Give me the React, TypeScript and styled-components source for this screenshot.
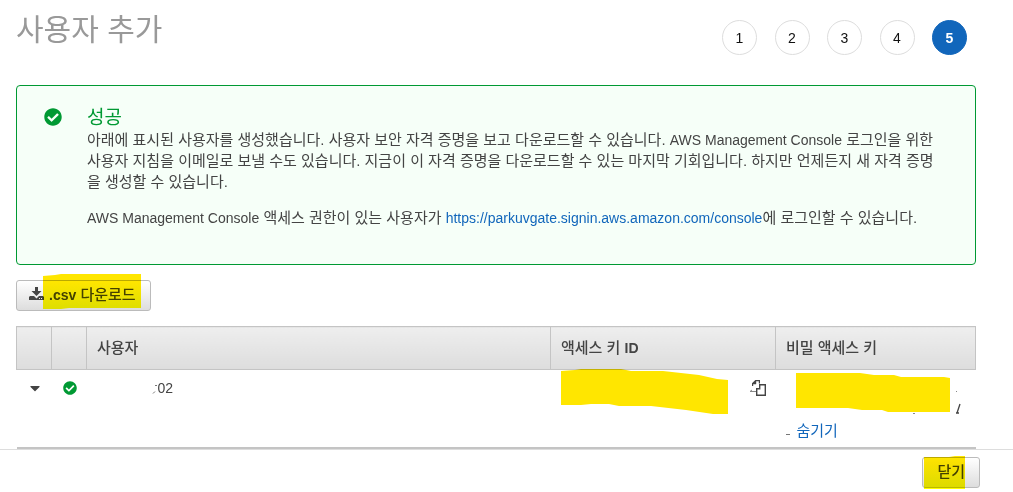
import React from "react";
import styled, { createGlobalStyle } from "styled-components";
import { FaCheckCircle, FaCaretDown } from "react-icons/fa";

const GlobalStyle = createGlobalStyle`
  * { box-sizing: border-box; }
  body {
    margin: 0;
    background: #fff;
    color: #444;
    font: 15px/21px "Liberation Sans", "Noto Sans CJK KR", sans-serif;
  }
`;

const Page = styled.div`
  display: flex;
  flex-direction: column;
`;

const Content = styled.main`
  padding: 0 37px 0 16px;
`;

const Header = styled.header`
  display: flex;
  justify-content: space-between;
  align-items: flex-start;
  height: 85px;
  padding-right: 9px;
`;

const Title = styled.h1`
  margin: 10px 0 0;
  font-size: 30px;
  line-height: 40px;
  font-weight: 400;
  color: #999;
`;

const Steps = styled.ol`
  display: flex;
  justify-content: space-between;
  width: 245px;
  margin: 20px 0 0;
  padding: 0;
  list-style: none;
`;

const Step = styled.li<{ $active?: boolean }>`
  width: 35px;
  height: 35px;
  border: 1px solid ${(p) => (p.$active ? "#1166bb" : "#ddd")};
  border-radius: 50%;
  background: ${(p) => (p.$active ? "#1166bb" : "#fff")};
  color: ${(p) => (p.$active ? "#fff" : "#111")};
  font-size: 14px;
  font-weight: ${(p) => (p.$active ? 700 : 400)};
  line-height: 34px;
  text-align: center;
`;

const Alert = styled.section`
  display: flex;
  gap: 25px;
  min-height: 180px;
  padding: 20px 32px 20px 27px;
  border: 1px solid #093;
  border-radius: 4px;
  background: #f6fff8;
`;

const AlertIcon = styled(FaCheckCircle)`
  flex: none;
  margin-top: 2px;
  color: #093;
`;

const AlertTitle = styled.h2`
  margin: 0;
  font-size: 19px;
  line-height: 23px;
  font-weight: 400;
  color: #093;
`;

const Text = styled.p`
  margin: 0 0 15px;
`;

const Latin = styled.span`
  font-size: 14px;
  line-height: 14px;
`;

const Link = styled.a`
  color: #1166bb;
  text-decoration: none;
`;

const Toolbar = styled.div`
  display: flex;
  padding: 15px 0;
`;

const Button = styled.button`
  position: relative;
  display: flex;
  align-items: center;
  gap: 5px;
  height: 31px;
  padding: 0 14px 2px;
  border: 1px solid #bbb;
  border-radius: 3px;
  background: linear-gradient(#fff, #ddd);
  color: #444;
  font: 500 15px/21px "Liberation Sans", "Noto Sans CJK KR", sans-serif;
`;

const DownloadButton = styled(Button)`
  padding-left: 12px;
`;

const Strong = styled.b`
  font-size: 14px;
  line-height: 14px;
`;

const Table = styled.table`
  width: 100%;
  table-layout: fixed;
  border-collapse: collapse;
  border-bottom: 2px solid #c4c4c4;
`;

const HeadCell = styled.th<{ $width?: number }>`
  width: ${(p) => (p.$width ? `${p.$width}px` : "auto")};
  height: 43px;
  padding: 0 10px 2px;
  border: 1px solid #c4c4c4;
  background: linear-gradient(#eee, #ddd);
  font-weight: 500;
  text-align: left;
`;

const Cell = styled.td`
  position: relative;
  height: 78px;
  padding: 8px 10px 0;
  vertical-align: top;
`;

const Centered = styled.div`
  display: flex;
  align-items: center;
  justify-content: center;
  height: 20px;
  padding-left: 1px;
`;

const UserName = styled.div`
  display: flex;
  align-items: center;
  gap: 1px;
  padding-left: 55px;
  font-size: 14px;
`;

const IconButton = styled.button`
  display: block;
  margin: 0 -1px 0 auto;
  padding: 0;
  border: 0;
  background: none;
`;

const SecretLine = styled.div`
  display: flex;
  align-items: center;
  gap: 7px;
  padding-top: 42px;
`;

const Dash = styled.span`
  width: 4px;
  height: 1px;
  margin-top: 8px;
  background: #777;
`;

const Marker = styled.svg<{ $x: number; $y: number }>`
  position: absolute;
  left: ${(p) => p.$x}px;
  top: ${(p) => p.$y}px;
  mix-blend-mode: multiply;
  pointer-events: none;
`;

const Footer = styled.footer`
  display: flex;
  justify-content: flex-end;
  padding: 7px 33px 4px 0;
  border-top: 1px solid #ddd;
`;

const InkGradient = ({ id }: { id: string }) => (
  <linearGradient id={id} x1="0" y1="0" x2="0" y2="1">
    <stop offset="0.2" stopColor="#ffe600" />
    <stop offset="1" stopColor="#ffff00" />
  </linearGradient>
);

export default function App() {
  return (
    <Page>
      <GlobalStyle />
      <Content>
        <Header>
          <Title>사용자 추가</Title>
          <Steps>
            {[1, 2, 3, 4, 5].map((n) => (
              <Step key={n} $active={n === 5}>{n}</Step>
            ))}
          </Steps>
        </Header>
        <Alert>
          <AlertIcon size={18} />
          <div>
            <AlertTitle>성공</AlertTitle>
            <Text>
              아래에 표시된 사용자를 생성했습니다. 사용자 보안 자격 증명을 보고 다운로드할 수 있습니다. <Latin>AWS Management Console</Latin> 로그인을 위한 사용자 지침을 이메일로 보낼 수도 있습니다. 지금이 이 자격 증명을 다운로드할 수 있는 마지막 기회입니다. 하지만 언제든지 새 자격 증명을 생성할 수 있습니다.
            </Text>
            <Text>
              <Latin>AWS Management Console</Latin> 액세스 권한이 있는 사용자가{" "}
              <Link href="#console"><Latin>https://parkuvgate.signin.aws.amazon.com/console</Latin></Link>에 로그인할 수 있습니다.
            </Text>
          </div>
        </Alert>
        <Toolbar>
          <DownloadButton type="button">
            <svg width="15" height="20" viewBox="0 0 15 20" fill="#444">
              <path d="M6 2h3v4h3.500L7.500 11 2.500 6H6z" />
              <path fillRule="evenodd" d="M1 11h4l2.500 2.500L10 11h4l1 1v3H0v-3zM10 13v1h1v-1zM12 13v1h1v-1z" />
            </svg>
            <span><Strong>.csv</Strong> 다운로드</span>
            <Marker $x={26} $y={-7} width="98" height="36" viewBox="0 0 98 36">
              <InkGradient id="ink-download" />
              <path d="M0 2 12 1 18 0H98V34H26L18 35H0Z" fill="url(#ink-download)" />
            </Marker>
          </DownloadButton>
        </Toolbar>
        <Table>
          <thead>
            <tr>
              <HeadCell $width={35} aria-label="펼치기" />
              <HeadCell $width={35} aria-label="상태" />
              <HeadCell>사용자</HeadCell>
              <HeadCell $width={225}>액세스 키 <Strong>ID</Strong></HeadCell>
              <HeadCell $width={200}>비밀 액세스 키</HeadCell>
            </tr>
          </thead>
          <tbody>
            <tr>
              <Cell>
                <Centered><FaCaretDown size={16} /></Centered>
              </Cell>
              <Cell>
                <Centered><FaCheckCircle size={14} color="#093" /></Centered>
              </Cell>
              <Cell>
                <UserName>
                  <svg width="5" height="12" viewBox="0 0 5 12" fill="none" stroke="#777">
                    <path d="M3 2.500h2M1 10.500l2-2" />
                  </svg>
                  02
                </UserName>
              </Cell>
              <Cell>
                <IconButton type="button" aria-label="복사">
                  <svg width="18" height="20" viewBox="0 0 18 20" fill="none" stroke="#444">
                    <path strokeWidth="1.4" d="M10.700 6.700h5.600v10.600H7.700v-6.600h3z" />
                    <path strokeWidth="1.2" d="M3.600 8V5.600l3-3h3.800v3M6.600 2.600v3h-3" />
                    <path stroke="#888" d="M7 13.500H1l2-1.500" />
                  </svg>
                </IconButton>
                <Marker $x={10} $y={-1} width="167" height="46" viewBox="0 0 167 46">
                  <path d="M0 2 14 1 20 0H60L70 2H102L138 6 156 10 167 11V45H152L125 41 90 37H58L48 35H30L20 36H0Z" fill="#ffe600" />
                </Marker>
              </Cell>
              <Cell>
                <SecretLine>
                  <Dash />
                  <Link href="#hide">숨기기</Link>
                </SecretLine>
                <Marker $x={20} $y={3} width="168" height="44" viewBox="0 0 168 44">
                  <path d="M0 0H64L78 2H98L105 4H148L154 5V39H92L86 37H66L52 35H0Z" fill="#ffe600" />
                  <path d="M164 31 161 40M160 40h3" fill="none" stroke="#444" strokeWidth="1.3" />
                  <path d="M160 18.500h1M117 40.500h2" stroke="#888" />
                </Marker>
              </Cell>
            </tr>
          </tbody>
        </Table>
      </Content>
      <Footer>
        <Button type="button">
          닫기
          <Marker $x={1} $y={-2} width="41" height="33" viewBox="0 0 41 33">
            <InkGradient id="ink-close" />
            <path d="M0 1H25L31 0H41V33H0Z" fill="url(#ink-close)" />
          </Marker>
        </Button>
      </Footer>
    </Page>
  );
}
